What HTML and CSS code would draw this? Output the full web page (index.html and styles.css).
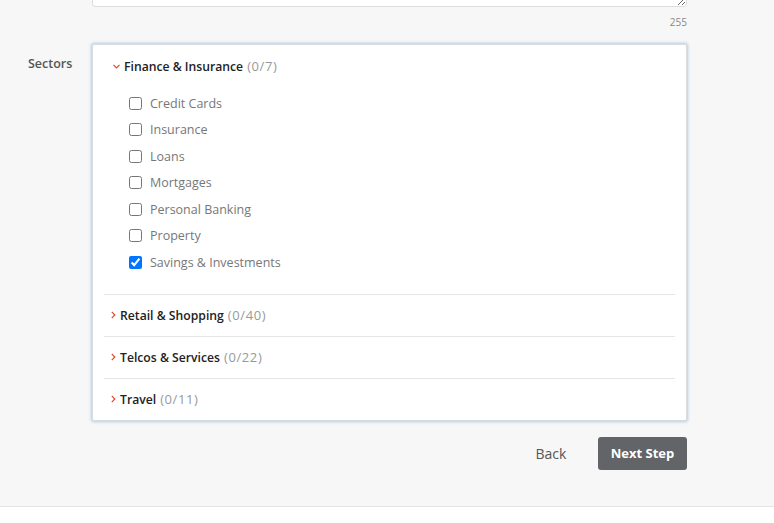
FILE: index.html
```html
<!DOCTYPE html>
<html>
<head>
<meta charset="utf-8">
<link rel="stylesheet" href="styles.css">
</head>
<body>
<main class="page">
  <div class="form-row">
    <div class="label"></div>
    <div class="field">
      <textarea class="textarea"></textarea>
      <div class="counter">255</div>
    </div>
  </div>
  <div class="form-row sectors-row">
    <div class="label">Sectors</div>
    <div class="field">
      <div class="sectors">
        <section class="sector open">
          <div class="sector-head">
            <svg class="chev-down" width="7" height="5" viewBox="0 0 7 5"><path d="M0.5 0.8 L3.5 3.8 L6.5 0.8" fill="none" stroke="#e0482e" stroke-width="1.2"/></svg>
            <span class="name">Finance &amp; Insurance</span><span class="count">(0/7)</span>
          </div>
          <ul class="items">
            <li><input type="checkbox"><span>Credit Cards</span></li>
            <li><input type="checkbox"><span>Insurance</span></li>
            <li><input type="checkbox"><span>Loans</span></li>
            <li><input type="checkbox"><span>Mortgages</span></li>
            <li><input type="checkbox"><span>Personal Banking</span></li>
            <li><input type="checkbox"><span>Property</span></li>
            <li><input type="checkbox" checked><span>Savings &amp; Investments</span></li>
          </ul>
        </section>
        <section class="sector">
          <div class="sector-head">
            <svg class="chev-right" width="5" height="8" viewBox="0 0 5 8"><path d="M0.8 0.8 L3.8 4 L0.8 7.2" fill="none" stroke="#e0482e" stroke-width="1.2"/></svg>
            <span class="name">Retail &amp; Shopping</span><span class="count">(0/40)</span>
          </div>
        </section>
        <section class="sector">
          <div class="sector-head">
            <svg class="chev-right" width="5" height="8" viewBox="0 0 5 8"><path d="M0.8 0.8 L3.8 4 L0.8 7.2" fill="none" stroke="#e0482e" stroke-width="1.2"/></svg>
            <span class="name">Telcos &amp; Services</span><span class="count">(0/22)</span>
          </div>
        </section>
        <section class="sector">
          <div class="sector-head">
            <svg class="chev-right" width="5" height="8" viewBox="0 0 5 8"><path d="M0.8 0.8 L3.8 4 L0.8 7.2" fill="none" stroke="#e0482e" stroke-width="1.2"/></svg>
            <span class="name">Travel</span><span class="count">(0/11)</span>
          </div>
        </section>
      </div>
      <div class="actions">
        <button class="btn-back">Back</button>
        <button class="btn-next">Next Step</button>
      </div>
    </div>
  </div>
</main>
<footer class="footer"></footer>
</body>
</html>
```

FILE: styles.css
```css
html, body {
  margin: 0;
  padding: 0;
}
body {
  background: #ffffff;
  font-family: "Open Sans", "Noto Sans", sans-serif;
  color: #333;
  overflow: hidden;
}
.page {
  background: #f7f7f7;
  height: 507px;
  border-bottom: 1px solid #e4e4e4;
  box-sizing: border-box;
  overflow: hidden;
}
.form-row {
  display: flex;
}
.form-row:first-child {
  margin-top: -54px;
}
.label {
  width: 92px;
  box-sizing: border-box;
  padding-left: 28px;
  font-size: 12.5px;
  font-weight: 600;
  color: #555;
}
.field {
  width: 595px;
  display: flex;
  flex-direction: column;
}
.textarea {
  display: block;
  width: 595px;
  height: 61px;
  box-sizing: border-box;
  border: 1px solid #dcdcdc;
  border-radius: 3px;
  background: #fff;
  margin: 0;
  resize: vertical;
}
.counter {
  text-align: right;
  font-size: 10px;
  color: #888;
  line-height: 14px;
  margin-top: 8px;
  height: 29px;
}
.sectors-row .label {
  padding-top: 11px;
  line-height: 18px;
}
.sectors {
  background: #fff;
  border: 1px solid #d9dde0;
  border-radius: 2px;
  box-shadow: 0 0 3px 1px rgba(120, 170, 215, 0.55);
  padding: 0 11px;
}
.sector + .sector {
  border-top: 1px solid #e6e6e6;
}
.sector-head {
  height: 41px;
  display: flex;
  align-items: center;
  padding-left: 7px;
  font-size: 12.2px;
}
.open .sector-head {
  height: 42px;
  padding-left: 9px;
}
.chev-down {
  margin-right: 4px;
  margin-top: 1px;
}
.chev-right {
  margin-right: 4px;
}
.name {
  font-weight: 600;
  color: #222;
}
.count {
  margin-left: 4px;
  color: #999;
  font-size: 13px;
  letter-spacing: 0.6px;
}
.items {
  list-style: none;
  margin: 3px 0 0;
  padding: 0 0 18px 25px;
}
.items li {
  height: 26.5px;
  display: flex;
  align-items: center;
  font-size: 12.5px;
  color: #777;
}
.items input {
  width: 13px;
  height: 13px;
  margin: 0 8px 0 0;
}
.actions {
  display: flex;
  justify-content: flex-end;
  align-items: center;
  margin-top: 16px;
  gap: 0;
}
.btn-back {
  background: none;
  border: none;
  font-family: inherit;
  font-size: 14px;
  color: #555;
  width: 90px;
  height: 33px;
  padding: 0;
  margin-right: 2px;
}
.btn-next {
  background: #636467;
  color: #fff;
  border: none;
  border-radius: 3px;
  font-family: inherit;
  font-size: 13px;
  font-weight: 700;
  width: 89px;
  height: 33px;
  padding: 0;
}
.footer {
  height: 16px;
  background: #fff;
}
```
